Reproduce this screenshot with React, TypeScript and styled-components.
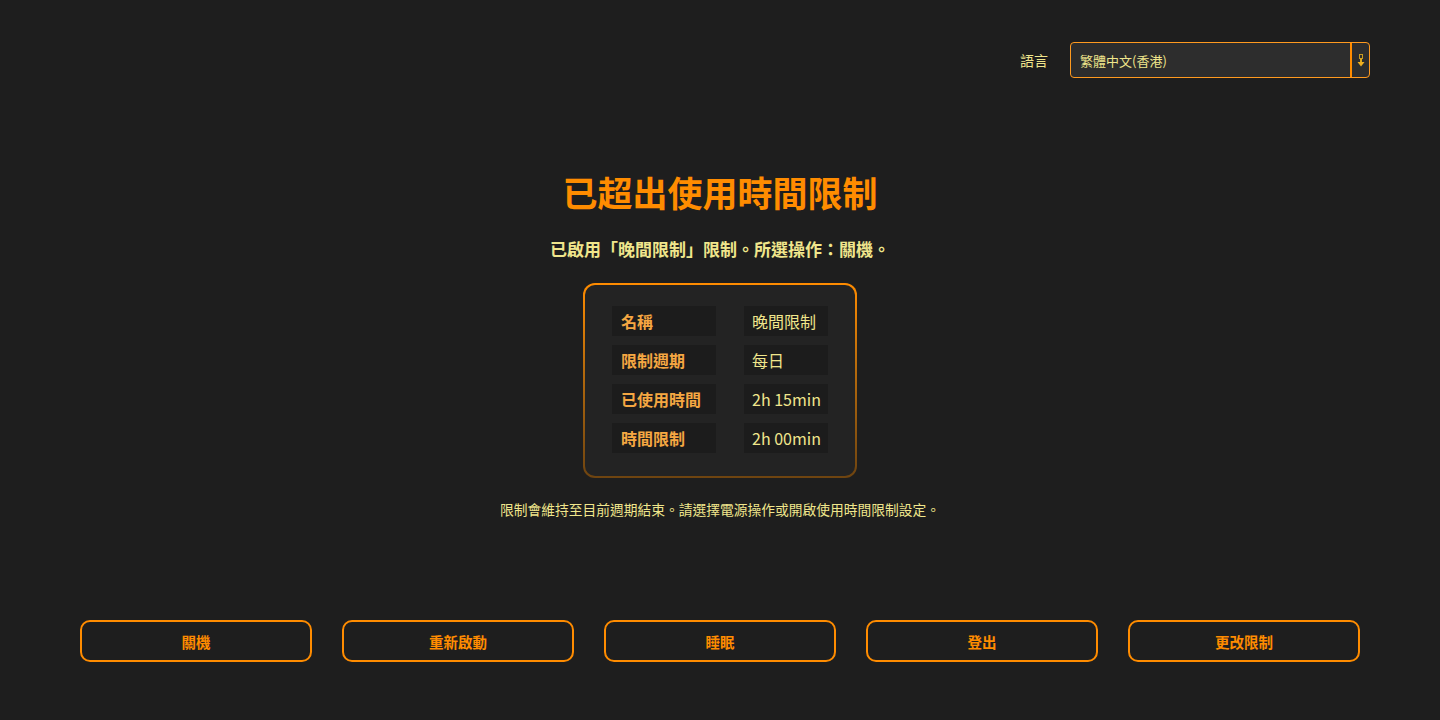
import React from "react";
import styled, { createGlobalStyle } from "styled-components";

const GlobalStyle = createGlobalStyle`
  html, body { margin: 0; padding: 0; background: #1e1e1e; }
  body { font-family: "Noto Sans CJK TC", "Noto Sans", sans-serif; }
  * { box-sizing: border-box; }
`;

const Page = styled.div`
  width: 1440px;
  height: 720px;
  background: #1e1e1e;
  display: flex;
  flex-direction: column;
  overflow: hidden;
`;

const Header = styled.header`
  display: flex;
  justify-content: flex-end;
  align-items: center;
  gap: 22px;
  padding: 42px 70px 0 0;
`;

const LangLabel = styled.span`
  font-size: 14px;
  color: #f0e68c;
`;

const Select = styled.div`
  width: 300px;
  height: 36px;
  display: flex;
  align-items: stretch;
  border: 1px solid #ff9a1f;
  border-radius: 4px;
  background: #2d2d2d;
  color: #f0e68c;
  font-size: 13px;
`;

const SelectValue = styled.span`
  flex: 1;
  display: flex;
  align-items: center;
  padding-left: 9px;
`;

const SelectArrow = styled.span`
  width: 19px;
  border-left: 2px solid #ff8c00;
  display: flex;
  align-items: center;
  justify-content: center;
`;

const Main = styled.main`
  display: flex;
  flex-direction: column;
  align-items: center;
  padding-top: 94px;
`;

const Title = styled.h1`
  margin: 0;
  font-size: 35px;
  line-height: 40px;
  font-weight: 700;
  color: #ff8c00;
`;

const Subtitle = styled.p`
  margin: 23px 0 0;
  font-size: 17px;
  line-height: 27px;
  font-weight: 700;
  color: #f0e68c;
`;

const Card = styled.section`
  margin-top: 21px;
  padding: 21px 27px 23px;
  border: 2px solid transparent;
  border-radius: 12px;
  background:
    linear-gradient(#232323, #232323) padding-box,
    linear-gradient(to bottom, #ff8c00 0%, #b56a0c 45%, #6e4410 100%) border-box;
`;

const InfoGrid = styled.div`
  display: grid;
  grid-template-columns: 104px 84px;
  column-gap: 28px;
  row-gap: 9px;
`;

const Cell = styled.div<{ $label?: boolean }>`
  height: 30px;
  display: flex;
  align-items: center;
  padding-left: ${(p) => (p.$label ? "9px" : "8px")};
  background: #1c1c1c;
  font-size: 16px;
  font-weight: ${(p) => (p.$label ? 700 : 400)};
  color: ${(p) => (p.$label ? "#f5a742" : "#f0e68c")};
  white-space: nowrap;
`;

const Note = styled.p`
  margin: 21px 0 0;
  font-size: 13.75px;
  line-height: 21px;
  color: #f0e68c;
`;

const Actions = styled.footer`
  margin-top: auto;
  padding: 0 80px 58px;
  display: grid;
  grid-template-columns: repeat(5, 1fr);
  column-gap: 30px;
`;

const ActionButton = styled.button`
  height: 42px;
  background: transparent;
  border: 2px solid #ff8c00;
  border-radius: 10px;
  color: #ff8c00;
  font-family: "Noto Sans CJK TC", "Noto Sans", sans-serif;
  font-size: 14.5px;
  font-weight: 700;
  cursor: pointer;
`;

const ArrowIcon = () => (
  <svg width="8" height="13" viewBox="0 0 8 13">
    <rect x="2.5" y="0.5" width="3" height="4" fill="none" stroke="#c89a20" strokeWidth="1" />
    <rect x="3" y="4.5" width="2" height="4" fill="#e0a81a" />
    <polygon points="0.5,8 7.5,8 4,12.5" fill="#f0b020" />
  </svg>
);

const rows: [string, string][] = [
  ["名稱", "晚間限制"],
  ["限制週期", "每日"],
  ["已使用時間", "2h 15min"],
  ["時間限制", "2h 00min"],
];

const actions = ["關機", "重新啟動", "睡眠", "登出", "更改限制"];

export default function App() {
  return (
    <>
      <GlobalStyle />
      <Page>
        <Header>
          <LangLabel>語言</LangLabel>
          <Select>
            <SelectValue>繁體中文(香港)</SelectValue>
            <SelectArrow>
              <ArrowIcon />
            </SelectArrow>
          </Select>
        </Header>
        <Main>
          <Title>已超出使用時間限制</Title>
          <Subtitle>已啟用「晚間限制」限制。所選操作：關機。</Subtitle>
          <Card>
            <InfoGrid>
              {rows.map(([k, v]) => (
                <React.Fragment key={k}>
                  <Cell $label>{k}</Cell>
                  <Cell>{v}</Cell>
                </React.Fragment>
              ))}
            </InfoGrid>
          </Card>
          <Note>限制會維持至目前週期結束。請選擇電源操作或開啟使用時間限制設定。</Note>
        </Main>
        <Actions>
          {actions.map((a) => (
            <ActionButton key={a}>{a}</ActionButton>
          ))}
        </Actions>
      </Page>
    </>
  );
}
